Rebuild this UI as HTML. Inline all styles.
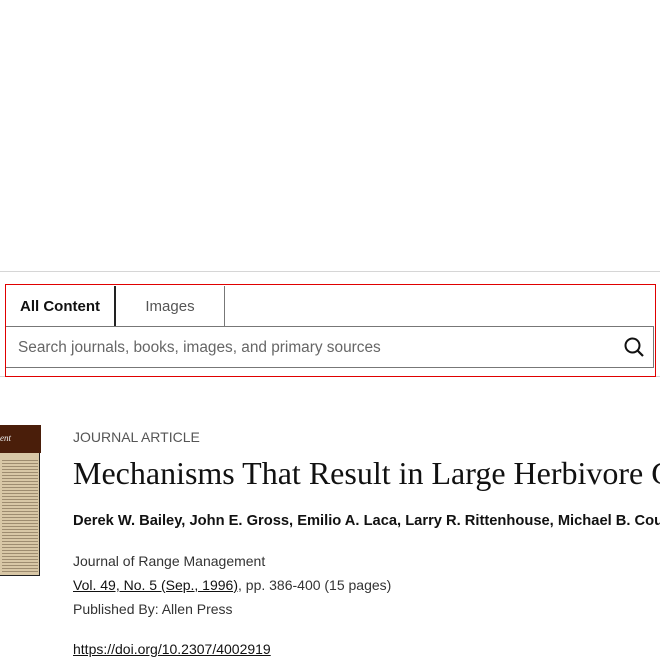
<!DOCTYPE html>
<html><head><style>
body{margin:0;width:660px;height:660px;overflow:hidden;background:#fff;font-family:"Liberation Sans",sans-serif;position:relative}
#w{position:absolute;left:0;top:0;width:660px;height:660px;overflow:hidden}
.a{position:absolute;white-space:nowrap}
</style></head><body><div id="w">
<div class="a" style="left:0;top:271px;width:660px;height:1px;background:#d6d6d6"></div>
<div class="a" style="left:0;top:376px;width:660px;height:1px;background:#d6d6d6"></div>
<div class="a" style="left:5px;top:284px;width:649px;height:91px;border:1px solid #e00000"></div>
<div class="a" style="left:6px;top:286px;width:108px;height:41px;border-right:2px solid #222;font-size:15px;font-weight:bold;color:#111;line-height:41px;text-align:center">All Content</div>
<div class="a" style="left:116px;top:286px;width:108px;height:40px;border-right:1px solid #777;font-size:15px;color:#555;line-height:41px;text-align:center">Images</div>
<div class="a" style="left:6px;top:326px;width:647px;height:40px;border:1px solid #777;border-left:none"></div>
<div class="a" style="left:6px;top:326px;width:647px;height:1px;background:#777"></div>
<div class="a" style="left:18px;top:339px;font-size:15.4px;color:#666">Search journals, books, images, and primary sources</div>
<svg class="a" style="left:623px;top:336px" width="22" height="22" viewBox="0 0 22 22"><circle cx="9.5" cy="9.5" r="7" fill="none" stroke="#111" stroke-width="2"/><line x1="14.5" y1="14.5" x2="20" y2="20" stroke="#111" stroke-width="2.2"/></svg>
<div class="a" style="left:0;top:425px;width:40px;height:151px;background:#d8c7a6;border:1px solid #222;border-left:none;box-sizing:border-box"></div>
<div class="a" style="left:0;top:425px;width:41px;height:28px;background:#4a1e0a"></div>
<div class="a" style="left:0;top:433px;font-size:9px;font-style:italic;color:#eee;font-family:'Liberation Serif',serif">ent</div>
<div class="a" style="left:2px;top:458px;width:36px;height:115px;background:repeating-linear-gradient(#d8c7a6 0 2px,#9e8c70 2px 3px)"></div>
<div class="a" style="left:73px;top:429px;font-size:14px;color:#555">JOURNAL ARTICLE</div>
<div class="a" style="left:73px;top:455px;font-size:32px;color:#111;font-family:'Liberation Serif',serif">Mechanisms That Result in Large Herbivore Grazing</div>
<div class="a" style="left:73px;top:513px;font-size:14.7px;font-weight:bold;color:#111">Derek W. Bailey, John E. Gross, Emilio A. Laca, Larry R. Rittenhouse, Michael B. Coughenour</div>
<div class="a" style="left:73px;top:553px;font-size:14px;color:#333">Journal of Range Management</div>
<div class="a" style="left:73px;top:577px;font-size:14px;color:#333"><span style="text-decoration:underline;color:#111">Vol. 49, No. 5 (Sep., 1996)</span>, pp. 386-400 (15 pages)</div>
<div class="a" style="left:73px;top:601px;font-size:14px;color:#333">Published By: Allen Press</div>
<div class="a" style="left:73px;top:641px;font-size:14px;color:#111;text-decoration:underline">https://doi.org/10.2307/4002919</div>
</div></body></html>
